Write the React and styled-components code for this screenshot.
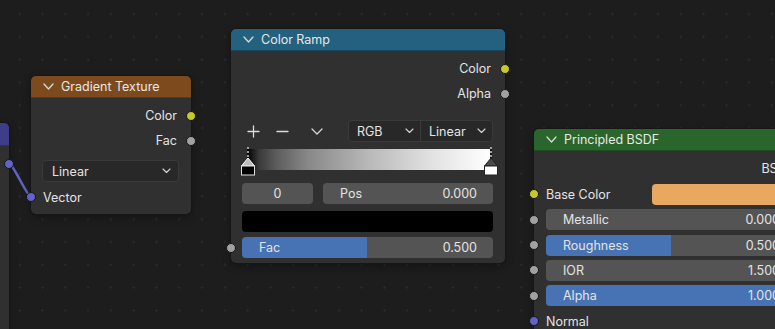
import React from 'react';
import styled, { createGlobalStyle } from 'styled-components';

const GlobalStyle = createGlobalStyle`
  html, body {
    margin: 0;
    padding: 0;
    background: #1d1d1d;
  }
  body {
    font-family: Inter, "Noto Sans", sans-serif;
    font-size: 12.5px;
    color: #e4e4e4;
  }
`;

const Canvas = styled.div`
  position: relative;
  width: 775px;
  height: 329px;
  overflow: hidden;
  background-color: #1d1d1d;
  background-image: radial-gradient(circle, #2b2b2b 0.9px, transparent 1.4px);
  background-size: 22.8px 22.8px;
  background-position: 8.3px 2.6px;
`;

const Wires = styled.svg`
  position: absolute;
  left: 0;
  top: 0;
  pointer-events: none;
`;

const Node = styled.div`
  position: absolute;
  left: ${p => p.$x}px;
  top: ${p => p.$y}px;
  width: ${p => p.$w}px;
  height: ${p => (p.$h ? `${p.$h}px` : 'auto')};
  box-sizing: border-box;
  background: #303030;
  border-radius: 5px;
  box-shadow: 0 0 0 1px #161616, 0 3px 8px rgba(0, 0, 0, 0.35);
  display: flex;
  flex-direction: column;
`;

const Header = styled.div`
  flex: none;
  box-sizing: border-box;
  height: ${p => p.$h || 22}px;
  display: flex;
  align-items: center;
  gap: 7px;
  padding-left: 12px;
  background: ${p => p.$color};
  border-radius: 5px 5px 0 0;
  border-bottom: 1px solid rgba(0, 0, 0, 0.25);
  color: #e8e8e8;
  white-space: nowrap;
`;

const Body = styled.div`
  display: flex;
  flex-direction: column;
  padding: 5px 0;
`;

const Row = styled.div`
  position: relative;
  flex: none;
  box-sizing: border-box;
  height: ${p => p.$h || 25}px;
  margin-top: ${p => p.$mt || 0}px;
  display: flex;
  align-items: center;
  justify-content: ${p => (p.$out ? 'flex-end' : 'flex-start')};
  padding: 0 ${p => p.$pr ?? 14}px 0 ${p => p.$pl ?? 12}px;
  white-space: nowrap;
`;

const Socket = styled.span`
  position: absolute;
  top: 50%;
  ${p => (p.$out ? 'right: -5px;' : 'left: -5px;')}
  width: 8px;
  height: 8px;
  margin-top: -5px;
  border-radius: 50%;
  background: ${p => p.$color};
  border: 1px solid #171717;
`;

const Select = styled.div`
  flex: 1;
  box-sizing: border-box;
  height: 22px;
  display: flex;
  align-items: center;
  justify-content: space-between;
  padding: 0 7px 0 9px;
  background: #282828;
  border: 1px solid #3a3a3a;
  border-radius: 4px;
`;

const SelectGroup = styled.div`
  display: flex;
  width: 145px;
  height: 22px;
  margin-left: auto;
  box-sizing: border-box;
  background: #282828;
  border: 1px solid #3a3a3a;
  border-radius: 4px;
`;

const Segment = styled.div`
  flex: 1;
  display: flex;
  align-items: center;
  justify-content: space-between;
  padding: 0 6px 0 8px;
  & + & {
    border-left: 1px solid #3a3a3a;
  }
`;

const IconButton = styled.div`
  width: 22px;
  height: 22px;
  display: flex;
  align-items: center;
  justify-content: center;
  margin-right: ${p => p.$gap || 0}px;
`;

const Ramp = styled.div`
  position: relative;
  flex: none;
  height: 28px;
  margin: 5px 12px 0 11px;
`;

const RampBar = styled.div`
  height: 21px;
  margin: 2px 3px 0 5px;
  background: linear-gradient(
    to right,
    #000 0%,
    #3a3a3a 5%,
    #5c5c5c 12%,
    #888 25%,
    #b8b8b8 50%,
    #e0e0e0 75%,
    #fff 100%
  );
`;

const Marker = styled.svg`
  position: absolute;
  top: 0;
  left: ${p => p.$left}px;
`;

const FieldRow = styled.div`
  position: relative;
  flex: none;
  display: flex;
  gap: 10px;
  height: 21px;
  margin: ${p => p.$mt || 0}px 12px 0 11px;
`;

const NumField = styled.div`
  box-sizing: border-box;
  width: ${p => (p.$w ? `${p.$w}px` : 'auto')};
  flex: ${p => (p.$w ? 'none' : 1)};
  height: 21px;
  display: flex;
  align-items: center;
  justify-content: ${p => (p.$center ? 'center' : 'space-between')};
  padding: ${p => (p.$center ? '0' : '0 16px 0 17px')};
  background: #545454;
  border-radius: 4px;
`;

const Swatch = styled.div`
  flex: ${p => (p.$w ? 'none' : 1)};
  width: ${p => (p.$w ? `${p.$w}px` : 'auto')};
  height: 21px;
  margin-left: ${p => (p.$w ? 'auto' : 0)};
  background: ${p => p.$color};
  border-radius: 4px;
`;

const Slider = styled.div`
  flex: 1;
  box-sizing: border-box;
  height: 21px;
  display: flex;
  align-items: center;
  justify-content: space-between;
  padding: 0 16px 0 17px;
  border-radius: 4px;
  background: linear-gradient(
    to right,
    #4772b3 ${p => p.$value * 100}%,
    #545454 ${p => p.$value * 100}%
  );
`;

const Chevron = ({ w = 9, h = 5, color = '#d8d8d8', sw = 1.3 }) => (
  <svg width={w + 2} height={h + 2} viewBox={`-1 -1 ${w + 2} ${h + 2}`}>
    <polyline
      points={`0,0 ${w / 2},${h} ${w},0`}
      fill="none"
      stroke={color}
      strokeWidth={sw}
      strokeLinecap="round"
      strokeLinejoin="round"
    />
  </svg>
);

const Plus = () => (
  <svg width="13" height="13" viewBox="0 0 13 13">
    <path d="M6.5 1v11M1 6.5h11" stroke="#dcdcdc" strokeWidth="1.3" strokeLinecap="round" />
  </svg>
);

const Minus = () => (
  <svg width="13" height="13" viewBox="0 0 13 13">
    <path d="M1 6.5h11" stroke="#dcdcdc" strokeWidth="1.3" strokeLinecap="round" />
  </svg>
);

const StopMarker = ({ left, active, fill }) => (
  <Marker $left={left} width="14" height="29" viewBox="0 0 14 29">
    <line x1="7" y1="0" x2="7" y2="11" stroke="#000" strokeWidth="1.2" />
    <line x1="7" y1="0" x2="7" y2="11" stroke="#fff" strokeWidth="1.2" strokeDasharray="2 2" />
    <polygon
      points="7,11 0.5,19 13.5,19"
      fill={active ? '#bdbdbd' : '#4a4a4a'}
      stroke={active ? '#fff' : '#222'}
      strokeWidth="1"
    />
    <rect
      x="0.5"
      y="19"
      width="13"
      height="9"
      fill={fill}
      stroke={active ? '#e0e0e0' : '#222'}
      strokeWidth="1"
    />
  </Marker>
);

const YELLOW = '#c7c729';
const GREY = '#a1a1a1';
const PURPLE = '#6363c7';

const SliderRow = ({ label, value, fill = 0, h = 25.4 }) => (
  <Row $h={h} $pl={12} $pr={12}>
    <Socket $color={GREY} />
    <Slider $value={fill}>
      <span>{label}</span>
      <span>{value}</span>
    </Slider>
  </Row>
);

export default function App() {
  return (
    <Canvas>
      <GlobalStyle />

      <Wires width="775" height="329">
        <path
          d="M9 163 C 13 164, 27 196, 31 197"
          fill="none"
          stroke={PURPLE}
          strokeWidth="2.5"
          strokeLinecap="round"
        />
      </Wires>

      {/* node cut off at the left edge */}
      <Node $x={-150} $y={123} $w={159} $h={260}>
        <Header $color="#3e3d88" $h={23} />
        <Body>
          <Row $out>
            <Socket $out $color={PURPLE} />
          </Row>
        </Body>
      </Node>

      <Node $x={31} $y={76} $w={160}>
        <Header $color="#7d4a1d">
          <Chevron />
          Gradient Texture
        </Header>
        <Body>
          <Row $out>
            Color
            <Socket $out $color={YELLOW} />
          </Row>
          <Row $out>
            Fac
            <Socket $out $color={GREY} />
          </Row>
          <Row $h={22} $mt={7} $pl={11} $pr={12}>
            <Select>
              <span>Linear</span>
              <Chevron w={7} h={3.5} sw={1.1} />
            </Select>
          </Row>
          <Row $h={24} $mt={3}>
            <Socket $color={PURPLE} />
            Vector
          </Row>
        </Body>
      </Node>

      <Node $x={231} $y={29} $w={274}>
        <Header $color="#23617f">
          <Chevron />
          Color Ramp
        </Header>
        <Body>
          <Row $out>
            Color
            <Socket $out $color={YELLOW} />
          </Row>
          <Row $out>
            Alpha
            <Socket $out $color={GREY} />
          </Row>
          <Row $h={22} $mt={14} $pl={11} $pr={12}>
            <IconButton $gap={7}>
              <Plus />
            </IconButton>
            <IconButton $gap={13}>
              <Minus />
            </IconButton>
            <IconButton>
              <Chevron w={10} h={5} />
            </IconButton>
            <SelectGroup>
              <Segment>
                <span>RGB</span>
                <Chevron w={7} h={3.5} sw={1.1} />
              </Segment>
              <Segment>
                <span>Linear</span>
                <Chevron w={7} h={3.5} sw={1.1} />
              </Segment>
            </SelectGroup>
          </Row>
          <Ramp>
            <RampBar />
            <StopMarker left={-1.5} active fill="#000" />
            <StopMarker left={241.5} fill="#fff" />
          </Ramp>
          <FieldRow $mt={8}>
            <NumField $w={71} $center>0</NumField>
            <NumField>
              <span>Pos</span>
              <span>0.000</span>
            </NumField>
          </FieldRow>
          <FieldRow $mt={7}>
            <Swatch $color="#000" />
          </FieldRow>
          <Row $h={21} $mt={5} $pl={11} $pr={12}>
            <Socket $color={GREY} />
            <Slider $value={0.5}>
              <span>Fac</span>
              <span>0.500</span>
            </Slider>
          </Row>
        </Body>
      </Node>

      <Node $x={534} $y={129} $w={274} $h={240}>
        <Header $color="#2a662c">
          <Chevron />
          Principled BSDF
        </Header>
        <Body>
          <Row $out>
            BSDF
            <Socket $out $color="#3fb83f" />
          </Row>
          <Row $h={26} $pr={12}>
            <Socket $color={YELLOW} />
            Base Color
            <Swatch $w={144} $color="#e8a85f" />
          </Row>
          <SliderRow label="Metallic" value="0.000" fill={0} />
          <SliderRow label="Roughness" value="0.500" fill={0.5} />
          <SliderRow label="IOR" value="1.500" fill={0} />
          <SliderRow label="Alpha" value="1.000" fill={1} />
          <Row>
            <Socket $color={PURPLE} />
            Normal
          </Row>
        </Body>
      </Node>
    </Canvas>
  );
}
